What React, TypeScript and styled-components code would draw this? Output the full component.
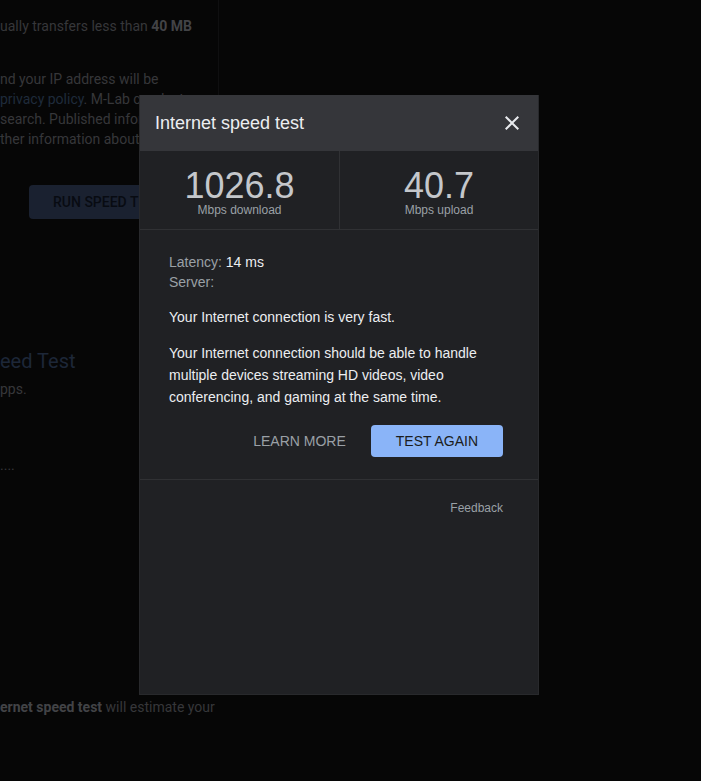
import styled, { createGlobalStyle } from "styled-components";

const GlobalStyle = createGlobalStyle`
  html, body {
    margin: 0;
    padding: 0;
    background: #060606;
  }
  body {
    font-family: Roboto, "Liberation Sans", Arial, sans-serif;
  }
`;

// dimmed page behind the dialog
const Page = styled.div`
  position: relative;
  width: 701px;
  height: 781px;
  overflow: hidden;
  color: #36373a;
  font-size: 14px;
  line-height: 20px;
`;

const TopColumn = styled.section`
  width: 219px;
  height: 240px;
  border-right: 1px solid #0f0f10;
  padding-top: 16px;
  box-sizing: border-box;
`;

const Line = styled.p<{ $gap?: number }>`
  margin: ${(p) => p.$gap ?? 0}px 0 0;
  white-space: nowrap;
`;

const Strong = styled.b`
  color: #424346;
  font-weight: 700;
`;

const PageLink = styled.span`
  color: #1f2b3b;
`;

const RunButton = styled.div`
  margin: 36px 0 0 29px;
  display: inline-flex;
  align-items: center;
  height: 34px;
  padding: 0 24px;
  border-radius: 4px;
  background: #1a2130;
  color: #080b12;
  font-weight: 500;
  font-size: 14px;
  white-space: nowrap;
`;

const SectionTitle = styled.h2`
  margin: 107px 0 0;
  font-size: 20px;
  line-height: 28px;
  font-weight: 400;
  color: #1d2738;
  white-space: nowrap;
`;

// dialog
const Dialog = styled.div`
  position: absolute;
  left: 139px;
  top: 95px;
  width: 400px;
  height: 600px;
  box-sizing: border-box;
  background: #202124;
  border: 1px solid #28292c;
  border-top: none;
  font-family: "Liberation Sans", Arial, sans-serif;
  color: #e8eaed;
  display: flex;
  flex-direction: column;
`;

const Header = styled.header`
  height: 56px;
  flex-shrink: 0;
  background: #35363a;
  display: flex;
  align-items: center;
  justify-content: space-between;
  padding: 0 14px 0 15px;
`;

const Title = styled.h1`
  margin: 0;
  font-size: 18px;
  font-weight: 400;
  color: #eceef1;
`;

const CloseButton = styled.button`
  width: 24px;
  height: 24px;
  padding: 0;
  border: none;
  background: none;
  color: #e8eaed;
  display: flex;
`;

const Stats = styled.div`
  display: grid;
  grid-template-columns: 1fr 1fr;
  border-bottom: 1px solid #303134;
`;

const Stat = styled.div<{ $divider?: boolean }>`
  height: 78px;
  box-sizing: border-box;
  padding-top: 17px;
  display: flex;
  flex-direction: column;
  align-items: center;
  border-left: ${(p) => (p.$divider ? "1px solid #303134" : "none")};
`;

const Number = styled.div`
  font-size: 36px;
  line-height: 36px;
  color: #c4c7cb;
`;

const Unit = styled.div`
  font-size: 12px;
  line-height: 12px;
  color: #9aa0a6;
`;

const Body = styled.div`
  padding: 22px 35px 22px 29px;
  border-bottom: 1px solid #303134;
  font-size: 14px;
`;

const Meta = styled.div`
  line-height: 20px;
  color: #9aa0a6;
`;

const Value = styled.span`
  color: #eceef1;
`;

const Text = styled.p<{ $gap: number }>`
  margin: ${(p) => p.$gap}px 0 0;
  line-height: 22px;
  color: #eceef1;
`;

const Actions = styled.div`
  margin-top: 17px;
  display: flex;
  justify-content: flex-end;
`;

const ActionButton = styled.button<{ $primary?: boolean }>`
  height: 32px;
  padding: 0 25px;
  border: none;
  border-radius: 4px;
  font-family: "Liberation Sans", Arial, sans-serif;
  font-size: 14px;
  text-transform: uppercase;
  background: ${(p) => (p.$primary ? "#8ab4f8" : "transparent")};
  color: ${(p) => (p.$primary ? "#1a1c20" : "#9aa0a6")};
`;

const Footer = styled.div`
  padding: 20px 35px 0 29px;
  display: flex;
  justify-content: flex-end;
`;

const FeedbackLink = styled.span`
  font-size: 12px;
  line-height: 16px;
  color: #9aa0a6;
`;

function CloseIcon() {
  return (
    <svg width="24" height="24" viewBox="0 0 24 24" fill="currentColor">
      <path d="M19 6.41 17.59 5 12 10.59 6.41 5 5 6.41 10.59 12 5 17.59 6.41 19 12 13.41 17.59 19 19 17.59 13.41 12z" />
    </svg>
  );
}

export default function App() {
  return (
    <>
      <GlobalStyle />
      <Page>
        <TopColumn>
          <Line>
            ually transfers less than <Strong>40 MB</Strong>
          </Line>
          <Line $gap={33}>nd your IP address will be</Line>
          <Line>
            <PageLink>privacy policy</PageLink>. M-Lab conducts
          </Line>
          <Line>search. Published information</Line>
          <Line>ther information about you</Line>
          <RunButton>RUN SPEED TEST</RunButton>
        </TopColumn>
        <SectionTitle>eed Test</SectionTitle>
        <Line $gap={4}>pps.</Line>
        <Line $gap={56}>....</Line>
        <Line $gap={222}>
          <Strong>ernet speed test</Strong> will estimate your
        </Line>

        <Dialog>
          <Header>
            <Title>Internet speed test</Title>
            <CloseButton aria-label="Close">
              <CloseIcon />
            </CloseButton>
          </Header>
          <Stats>
            <Stat>
              <Number>1026.8</Number>
              <Unit>Mbps download</Unit>
            </Stat>
            <Stat $divider>
              <Number>40.7</Number>
              <Unit>Mbps upload</Unit>
            </Stat>
          </Stats>
          <Body>
            <Meta>
              Latency: <Value>14 ms</Value>
            </Meta>
            <Meta>Server:</Meta>
            <Text $gap={14}>Your Internet connection is very fast.</Text>
            <Text $gap={14}>
              Your Internet connection should be able to handle multiple devices
              streaming HD videos, video conferencing, and gaming at the same
              time.
            </Text>
            <Actions>
              <ActionButton>Learn more</ActionButton>
              <ActionButton $primary>Test again</ActionButton>
            </Actions>
          </Body>
          <Footer>
            <FeedbackLink>Feedback</FeedbackLink>
          </Footer>
        </Dialog>
      </Page>
    </>
  );
}
